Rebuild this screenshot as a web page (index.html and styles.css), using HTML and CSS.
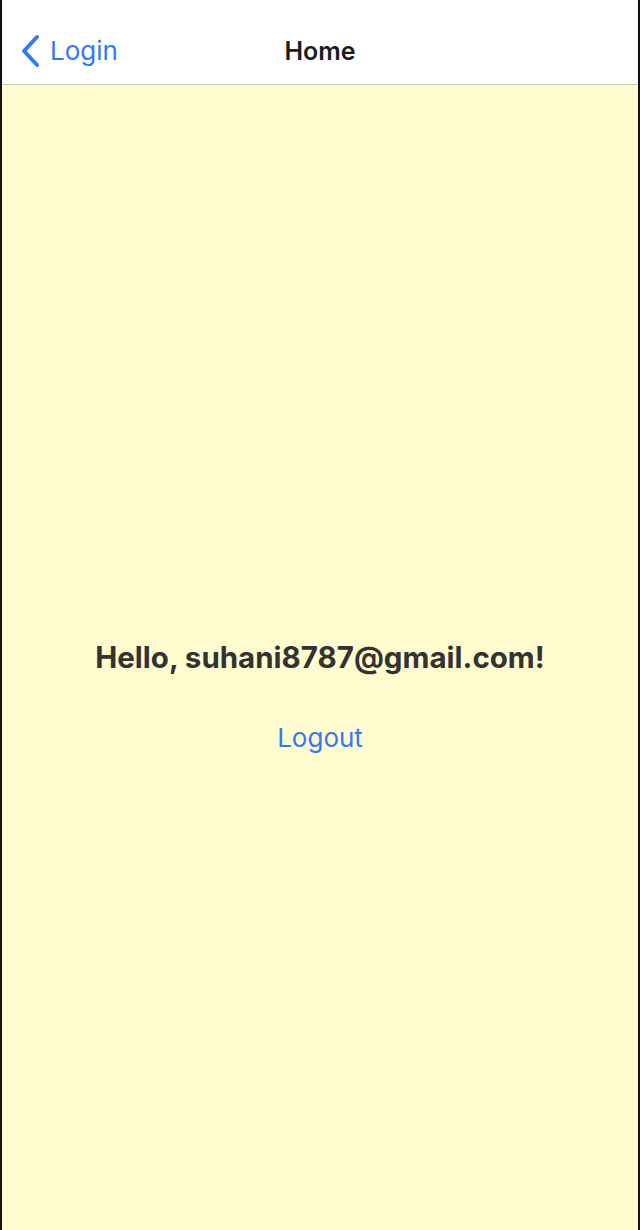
FILE: index.html
```html
<!DOCTYPE html>
<html>
<head>
<meta charset="utf-8">
<link rel="stylesheet" href="styles.css">
</head>
<body>
<div class="screen">
  <header class="navbar">
    <a class="back">
      <svg class="chev" width="22" height="34" viewBox="0 0 22 34"><path d="M17 3 L4 17 L17 31" fill="none" stroke="#3478f6" stroke-width="4" stroke-linecap="round" stroke-linejoin="round"/></svg>
      <span class="back-label">Login</span>
    </a>
    <div class="title">Home</div>
  </header>
  <main class="content">
    <div class="hello">Hello, suhani8787@gmail.com!</div>
    <div class="logout">Logout</div>
  </main>
</div>
</body>
</html>
```

FILE: styles.css
```css
html, body {
  margin: 0;
  padding: 0;
  height: 100%;
}
body {
  background: #111;
  font-family: Inter, "Liberation Sans", sans-serif;
}
.screen {
  box-sizing: border-box;
  height: 1230px;
  margin: 0 2px;
  display: flex;
  flex-direction: column;
  background: #fffdd0;
}
.navbar {
  box-sizing: border-box;
  height: 85px;
  flex: none;
  padding-top: 17px;
  background: #ffffff;
  border-bottom: 1px solid #cfccb0;
  display: grid;
  grid-template-columns: 1fr auto 1fr;
  align-items: center;
}
.back {
  display: flex;
  align-items: center;
  gap: 8px;
  padding-left: 18px;
  color: #3478f6;
}
.chev {
  display: block;
}
.back-label {
  font-size: 26px;
  font-weight: 400;
}
.title {
  font-size: 25px;
  font-weight: 600;
  color: #1c1c1e;
}
.content {
  flex: 1;
  display: flex;
  flex-direction: column;
  align-items: center;
  padding-top: 555px;
}
.hello {
  font-size: 29.5px;
  line-height: 34px;
  font-weight: 700;
  color: #333333;
}
.logout {
  margin-top: 48px;
  font-size: 26px;
  line-height: 32px;
  color: #3478f6;
}
```
